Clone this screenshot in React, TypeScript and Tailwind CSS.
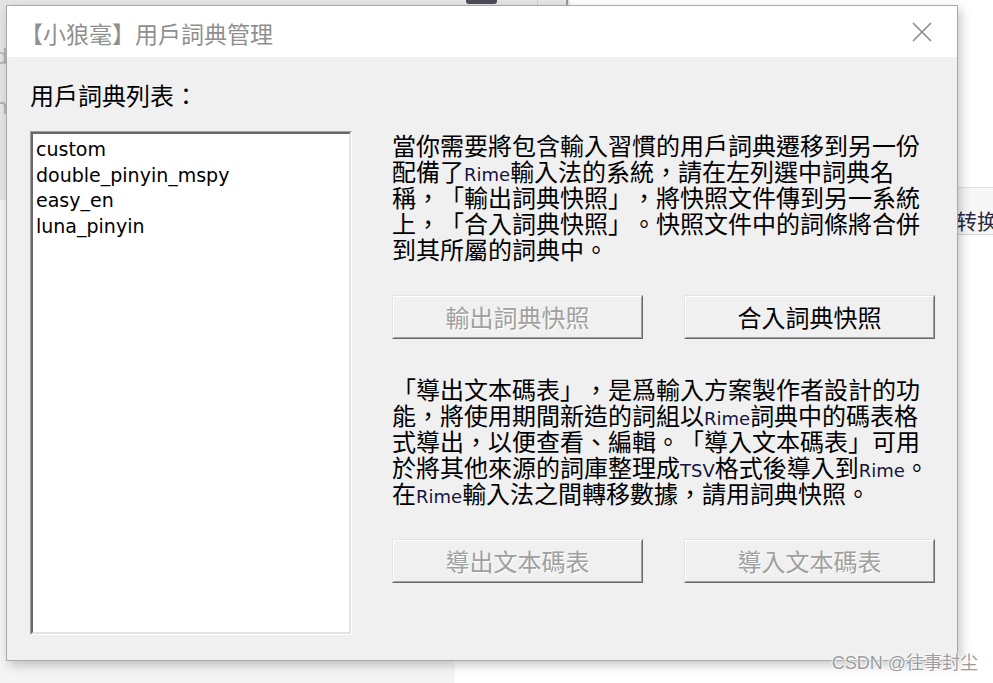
import React from "react";

const CJK = "font-['Noto_Sans_CJK_TC','Noto_Sans_CJK_SC',sans-serif] [text-spacing-trim:space-all]";

function L({ children }: { children: React.ReactNode }) {
  return (
    <span className="font-['DejaVu_Sans',sans-serif] text-[18px] text-[#14143c]">{children}</span>
  );
}

function Para({ lines }: { lines: React.ReactNode[] }) {
  return (
    <div className={`${CJK} text-[24px] leading-[26px] text-black`}>
      {lines.map((l, i) => (
        <div key={i} className="whitespace-nowrap h-[26px]">
          {l}
        </div>
      ))}
    </div>
  );
}

function Btn({ label, disabled }: { label: string; disabled?: boolean }) {
  return (
    <div className="w-[251px] h-[44px] border border-t-[#e3e3e3] border-l-[#e3e3e3] border-b-[#696969] border-r-[#696969]">
      <div
        className={`h-full border border-t-white border-l-white border-b-[#a0a0a0] border-r-[#a0a0a0] bg-[#f0f0f0] flex items-center justify-center ${CJK} text-[24px] leading-[26px] ${
          disabled ? "text-[#a0a0a0] [text-shadow:1px_1px_0_#ffffff]" : "text-black"
        }`}
      >
        {label}
      </div>
    </div>
  );
}

export default function App() {
  const p1 = [
    "當你需要將包含輸入習慣的用戶詞典遷移到另一份",
    <>配備了<L>Rime</L>輸入法的系統，請在左列選中詞典名</>,
    "稱，「輸出詞典快照」，將快照文件傳到另一系統",
    "上，「合入詞典快照」。快照文件中的詞條將合併",
    "到其所屬的詞典中。",
  ];
  const p2 = [
    "「導出文本碼表」，是爲輸入方案製作者設計的功",
    <>能，將使用期間新造的詞組以<L>Rime</L>詞典中的碼表格</>,
    "式導出，以便查看、編輯。「導入文本碼表」可用",
    <>於將其他來源的詞庫整理成<L>TSV</L>格式後導入到<L>Rime</L>。</>,
    <>在<L>Rime</L>輸入法之間轉移數據，請用詞典快照。</>,
  ];
  const items = ["custom", "double_pinyin_mspy", "easy_en", "luna_pinyin"];

  return (
    <div className="relative w-[993px] h-[683px] overflow-hidden bg-white">
      {/* desktop backdrop */}
      <div className="absolute left-0 top-0 w-[570px] h-[6px] bg-[#e6e6e6]" />
      <div className="absolute left-[466px] top-0 w-[31px] h-[4px] rounded-b-[3px] bg-[#4b4b5a]" />
      <div className="absolute left-[537px] top-0 w-[1px] h-[6px] bg-[#cfcfcf]" />
      <div className="absolute left-[566px] top-0 w-[2px] h-[6px] bg-[#9a9a9a]" />
      <div className="absolute left-0 top-0 w-[8px] h-[200px] bg-[#e4e4e4]" />
      <div className="absolute left-0 top-[200px] w-[8px] h-[483px] bg-[#f3f3f3]" />
      <div className="absolute left-[-6px] top-[44px] text-[22px] leading-[26px] text-[#b0b0b0] font-['DejaVu_Sans',sans-serif]">d</div>
      <div className="absolute left-[-6px] top-[94px] text-[22px] leading-[26px] text-[#b0b0b0] font-['DejaVu_Sans',sans-serif]">n</div>
      <div className="absolute left-0 top-[661px] w-[455px] h-[22px] bg-[#f4f4f4]" />
      <div className="absolute left-[940px] top-[187px] w-[60px] h-[48px] bg-[#f7f7f7] border-t border-b border-t-[#e2e2e2] border-b-[#d6d6d6]" />
      <div className="absolute left-[956px] top-[206px] text-[21px] leading-[28px] text-[#2a2a40] whitespace-nowrap font-['Noto_Sans_CJK_SC',sans-serif]">
        转换
      </div>

      {/* window */}
      <div className="absolute left-[6px] top-[5px] w-[952px] h-[656px] border border-[#a9a9a9] bg-[#f0f0f0] shadow-[3px_4px_10px_rgba(0,0,0,0.22)] flex flex-col">
        <div className="h-[51px] shrink-0 bg-white flex items-center justify-between pl-[13px] pr-[25px]">
          <div className={`${CJK} text-[23px] leading-[28px] text-[#8f8f8f] pt-[3px]`}>【小狼毫】用戶詞典管理</div>
          <svg width="20" height="20" viewBox="0 0 20 20" className="block">
            <path d="M1 1 L19 19 M19 1 L1 19" stroke="#8a8a8a" strokeWidth="1.6" fill="none" />
          </svg>
        </div>
        <div className="flex-1 flex flex-col pl-[23px] pt-[25px]">
          <div className={`${CJK} text-[24px] leading-[26px] h-[26px] text-black`}>用戶詞典列表：</div>
          <div className="flex mt-[23px] gap-[40px]">
            <div className="w-[322px] h-[504px] border border-t-[#a0a0a0] border-l-[#a0a0a0] border-b-white border-r-white">
              <div className="h-full border-2 border-t-[#696969] border-l-[#696969] border-b-[#e3e3e3] border-r-[#e3e3e3] bg-white pl-[3px] pt-[3px]">
                {items.map((it) => (
                  <div key={it} className="font-['DejaVu_Sans',sans-serif] text-[19px] leading-[25.7px] text-black whitespace-nowrap">
                    {it}
                  </div>
                ))}
              </div>
            </div>
            <div className="w-[543px] pt-[1px] flex flex-col">
              <Para lines={p1} />
              <div className="flex gap-[41px] mt-[33px]">
                <Btn label="輸出詞典快照" disabled />
                <Btn label="合入詞典快照" />
              </div>
              <div className="mt-[37px]">
                <Para lines={p2} />
              </div>
              <div className="flex gap-[41px] mt-[33px]">
                <Btn label="導出文本碼表" disabled />
                <Btn label="導入文本碼表" disabled />
              </div>
            </div>
          </div>
        </div>
      </div>

      {/* watermark */}
      <div className="absolute right-[15px] top-[651px] text-[18px] leading-[24px] text-[#9c9c9c] whitespace-nowrap font-['Liberation_Sans','Noto_Sans_CJK_SC',sans-serif] [text-shadow:0_0_2px_#ffffff,0_0_2px_#ffffff,0_0_2px_#ffffff]">
        CSDN @往事封尘
      </div>
    </div>
  );
}
